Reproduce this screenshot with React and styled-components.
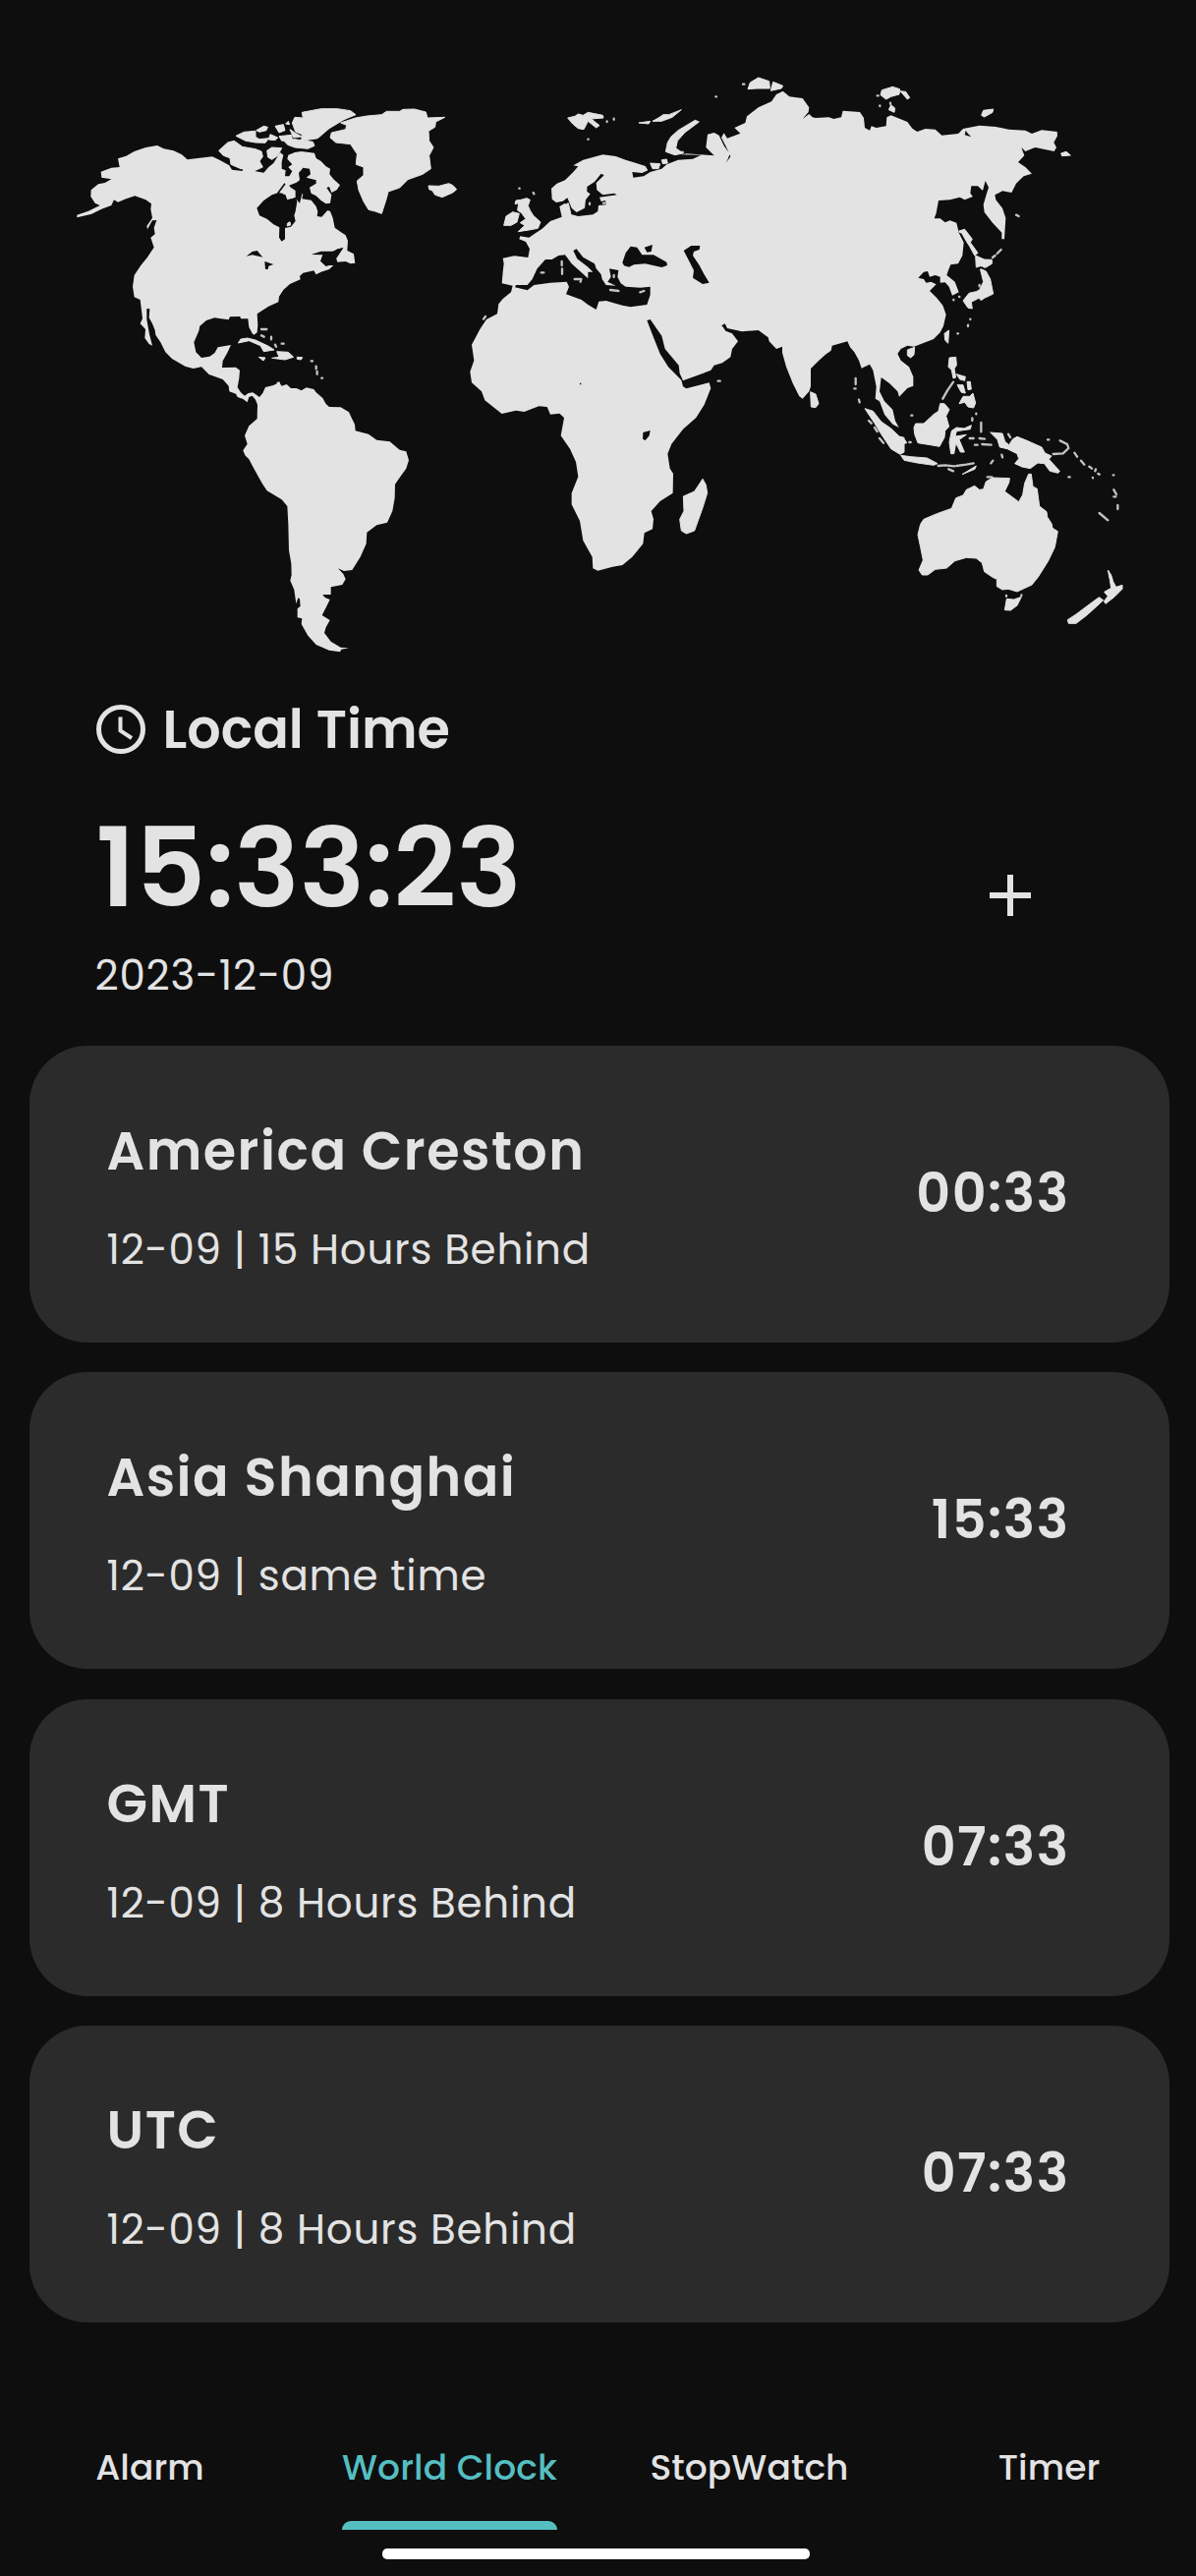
import React from "react";
import styled, { createGlobalStyle } from "styled-components";

const color = {
  page: "#0e0e0e",
  card: "#2b2b2b",
  text: "#e3e3e3",
  accent: "#55bec1",
};

const GlobalStyle = createGlobalStyle`
  * { box-sizing: border-box; }
  body {
    margin: 0;
    background: ${color.page};
    color: ${color.text};
    font-family: Poppins, Inter, "Open Sans", sans-serif;
  }
`;

const Screen = styled.main`
  display: flex;
  flex-direction: column;
  width: 1217px;
  height: 2621px;
  overflow: hidden;
  background: ${color.page};
`;

const MapSvg = styled.svg`
  display: block;
  flex: none;
  width: 1217px;
  height: 700px;

  .land { fill: ${color.text}; }
  g .land { stroke: ${color.text}; stroke-width: 3; stroke-linejoin: round; }
  .water { fill: ${color.page}; }
  .isles { fill: none; stroke: ${color.text}; stroke-width: 7; stroke-linecap: round; stroke-linejoin: round; opacity: 0.85; }
  .straits { fill: none; stroke: ${color.page}; stroke-width: 5; stroke-linejoin: round; }
`;

const Local = styled.section`
  display: flex;
  align-items: center;
  justify-content: space-between;
  height: 364px;
  padding: 12px 168px 45px 96.5px;
`;

const LocalInfo = styled.div`
  display: flex;
  flex-direction: column;
  height: 100%;
`;

const LocalTitle = styled.h1`
  display: flex;
  align-items: center;
  gap: 17.5px;
  margin: 0 0 0 1.5px;
  font-size: 54px;
  line-height: 60px;
  font-weight: 600;
  white-space: nowrap;
  svg { flex: none; }
`;

const LocalClock = styled.time`
  display: block;
  margin: 56px 0 0 1px;
  font-size: 111px;
  line-height: 110px;
  font-weight: 600;
  white-space: nowrap;
`;

const LocalDate = styled.time`
  display: block;
  margin-top: 26.5px;
  font-size: 42px;
  line-height: 56px;
  letter-spacing: 0.75px;
`;

const AddButton = styled.button`
  display: flex;
  margin: 91px 0 0;
  padding: 0;
  border: 0;
  background: none;
  color: inherit;
`;

const Zones = styled.ul`
  display: flex;
  flex-direction: column;
  gap: 30.33px;
  margin: 0;
  padding: 0 27px 0 30px;
  list-style: none;
`;

const ZoneCard = styled.li`
  display: flex;
  justify-content: space-between;
  align-items: flex-start;
  height: 302px;
  padding: 75.5px 101.5px 0 78.5px;
  border-radius: 59px;
  background: ${color.card};
`;

const ZoneName = styled.h2`
  margin: 0;
  font-size: 54px;
  line-height: 62px;
  font-weight: 600;
  letter-spacing: 1.5px;
  white-space: nowrap;
`;

const ZoneNote = styled.p`
  margin: 42.5px 0 0;
  font-size: 42px;
  line-height: 56px;
  letter-spacing: 0.75px;
  white-space: nowrap;
`;

const ZoneTime = styled.time`
  margin-top: 43.5px;
  font-size: 54px;
  line-height: 62px;
  font-weight: 600;
  letter-spacing: 1.5px;
`;

const Tabs = styled.nav`
  display: grid;
  grid-template-columns: repeat(4, 1fr);
  justify-items: center;
  margin: 112px -3px 0 0;
`;

const Tab = styled.a`
  display: flex;
  flex-direction: column;
  justify-content: space-between;
  height: 99px;
  padding-top: 11px;
  font-size: 36px;
  line-height: 50px;
  font-weight: 500;
  letter-spacing: 0.1px;
  white-space: nowrap;
  color: ${(p) => (p.$active ? color.accent : color.text)};
  &::after {
    content: "";
    height: 9px;
    border-radius: 9px 9px 0 0;
    background: ${(p) => (p.$active ? color.accent : "transparent")};
  }
`;

const HomeBar = styled.div`
  flex: none;
  width: 435px;
  height: 11px;
  margin: 19px 0 0 389px;
  border-radius: 5px;
  background: #fff;
`;

// Origin of every map sheet, in map units (three to a pixel).
const sheet = {
  northAmerica: [180, 270],
  southAmerica: [180, 1140],
  europe: [1380, 180],
  africa: [1380, 900],
  siberia: [2340, 180],
  oceania: [2340, 1080],
};

// One continuous coastline whose points lie on several sheets.
const coast = (...parts) =>
  "M" +
  parts
    .map(([name, points]) => {
      const [dx, dy] = sheet[name];
      return points
        .trim()
        .split(/\s+/)
        .map((pair) => {
          const [x, y] = pair.split(",").map(Number);
          return `${x + dx},${y + dy}`;
        })
        .join(" ");
    })
    .join(" L") +
  "Z";

const americas = coast(
  ["northAmerica", `55,386 90,374 125,357 110,350 97,330 98,310 120,292 140,288 160,277 130,272 128,254 160,242 185,240
    180,214 205,206 230,192 265,180 300,174 320,184 350,190 375,202 392,217 430,212 468,208 490,218 520,235 528,248 560,252
    565,238 590,243 600,253 625,257 640,240 655,228 675,195 685,203 680,225 680,245 692,250 690,268 703,268 712,253 700,240
    712,232 697,215 700,203 720,195 740,192 780,197 785,213 800,222 815,238 828,245 826,262 838,277 858,295 848,310 832,318
    825,300 817,303 832,325 828,350 815,352 800,342 785,328 765,318 745,320 742,337 770,341 785,360 790,375 788,390 802,392
    820,372 828,375 836,395 842,425 860,438 875,448 882,465 880,495 900,505 904,533 890,535 875,528 848,530 846,520 868,487
    850,490 835,500 820,540 838,540 825,552 800,560 785,568 778,556 745,563 735,573 737,583 705,597 685,615 672,635 670,652
    640,665 605,688 607,722 605,745 595,752 590,748 580,728 577,703 555,703 553,696 522,697 518,706 495,703 475,700 450,708
    430,725 427,740 412,775 418,805 435,822 460,818 475,808 485,790 525,783 515,805 500,832 498,852 540,851 552,860 550,885`],
  ["southAmerica", `545,42 555,58 567,68 578,60 592,58 612,72 622,60 630,42 655,36 672,27 680,38 695,33 708,45 725,45 740,52
    755,43 778,48 785,58 805,75 815,93 825,102 860,103 885,118 893,135 903,155 905,175 945,185 970,203 1010,208 1040,233
    1060,238 1068,265 1060,290 1042,315 1026,338 1025,380 1018,420 1002,455 970,463 940,485 938,520 920,560 895,600 870,603
    852,595 868,612 875,628 865,645 830,652 830,675 805,675 812,684 827,690 815,715 803,738 827,753 815,775 810,792 830,818
    860,836 885,838 862,842 858,850 825,845 785,828 760,800 740,765 742,748 728,745 728,718 737,710 735,688 730,685 724,703
    718,660 706,632 710,615 709,580 702,540 700,460 697,405 680,385 635,358 620,335 595,290 580,262 568,250 562,235 575,215
    567,190 580,160 605,138 606,95 600,80 590,68 580,72 575,88 562,78 545,72 540,62 520,55 518,38 500,18 458,3`],
  ["northAmerica", `435,850 410,855 385,848 345,825 325,805 310,775 295,752 293,738 285,718 275,700 277,673 268,672 268,705 276,750
    285,785 275,780 262,762 264,735 248,718 255,702 248,645 230,637 225,605 230,570 250,540 270,515 290,485 280,455 293,445
    290,425 298,402 285,403 270,430 268,420 285,395 280,368 282,352 265,340 232,328 205,337 180,347 168,340 160,357 130,368 100,383 55,394`]
);

const afroEurasia = coast(
  ["europe", `152,685 155,650 158,625 155,608 190,601 232,606 237,580 225,558 205,550 208,541 235,545 250,535 275,518 300,495
    335,482 328,450 345,440 355,460 365,475 385,480 430,475 445,465 447,447 470,445 468,432 455,435 450,422 503,415 495,410
    460,415 442,400 440,378 464,355 455,350 435,375 412,390 412,405 422,412 408,430 405,455 380,468 365,455 352,424 338,434
    318,438 305,428 303,395 320,380 345,370 370,345 385,328 370,325 400,308 430,300 460,292 500,297 530,308 560,317 590,327
    598,340 580,348 550,345 553,362 585,358 605,345 640,335 655,322 690,308 735,305 760,293 700,292 715,289 800,295 775,270
    780,230 800,225 815,233 830,265 848,290 838,315 850,298 835,265 822,240 830,226 840,242 880,227 862,210 895,195 900,175
    935,148 975,130 990,108 1010,98 1030,115 1070,120 1090,148 1088,162 1070,183 1090,168 1100,178`],
  ["siberia", `150,180 190,178 205,183 228,178 233,158 285,162 297,180 300,210 315,218 320,205 335,210 365,205 367,178 380,172
    430,192 445,212 460,222 485,213 515,215 535,233 585,228 600,213 650,203 700,207 740,215 790,218 810,228 840,217 887,222
    888,235 877,255 885,270 878,282 820,270 790,282 778,270 787,295 768,315 790,330 810,350 785,358 762,380 748,408 720,403
    697,415 700,430 720,455 730,485 726,550 718,550 718,530 690,500 665,468 662,445 672,410 678,392 668,372 660,402 645,388
    625,388 622,410 630,420 605,430 590,422 560,430 525,432 518,470 512,487 530,487 545,499 560,493 580,500 587,530 602,560
    598,600 585,625 562,628 555,645 550,660 575,680 587,712 567,722 557,695 545,682 530,683 530,665 515,660 498,665 492,648
    480,650 463,668 480,672 487,683 502,680 518,688 498,708 520,730 538,752 548,780 540,815 530,835 510,855 450,878 430,875 410,885`],
  ["oceania", `400,0 410,20 435,40 448,70 448,98 430,105 405,131 400,115 375,90 350,72 345,115 360,145 385,170 393,205 404,225
    385,215 360,185 345,145 332,137 335,100 325,50 315,32 290,44 282,20 268,-5 255,-20 247,-38 200,-25 197,-10 180,2 160,20
    135,45 135,100 130,115 110,137 100,130 80,90 60,40 48,-3`],
  ["europe", `1008,878 990,885 968,862 965,850 935,828 885,832 840,822 833,808 820,815 805,838 785,840 783,820 760,800 740,775
    755,768 775,790 800,808 825,815 835,830 855,838 873,862`],
  ["africa", `855,165 850,190 825,208 800,215 790,230 765,240 705,262 695,240 692,215 650,165 640,125 605,75 595,78 615,130
    635,180 660,220 700,260 705,280 715,286 785,268 790,285 770,335 745,375 705,410 670,455 658,485 665,530 675,545 674,605
    635,630 608,660 615,685 612,715 587,727 583,760 550,800 520,825 490,830 445,842 430,835 428,800 400,750 390,690 365,640
    365,605 385,555 378,510 360,470 332,430 342,375 328,362 300,365 290,342 265,340 220,357 195,353 152,363 100,322 90,295
    60,268 55,235 67,200 60,152 85,105 105,75 138,58 142,28`],
  ["europe", `155,732 180,712 185,692`]
);

const sheets = [
  {
    name: "northAmerica",
    land: [
      "M488,190L515,165 535,160 560,178 600,185 618,192 622,208 612,222 622,240 600,250 555,245 525,232 522,212 502,205Z",
      "M540,145L565,133 600,130 600,148 612,155 640,152 630,166 600,165 570,160Z",
      "M602,128L625,115 637,118 633,128 612,133Z M660,115L685,110 690,128 672,135Z M692,108l8-8 4,10z",
      "M645,140L668,150 660,158 640,156Z M672,146L710,142 712,156 680,160Z M705,125l18,12 18,10 -25,3z",
      "M635,190L650,180 680,182 668,205 650,217 638,210Z M685,158L720,155 775,163 780,175 760,184 720,180 698,172Z",
      "M712,105L720,88 745,90 742,73 800,62 850,62 890,68 906,80 870,95 825,122 790,152 740,160 742,140 722,132Z",
      "M905,90L940,84 985,80 1000,70 1040,70 1050,64 1085,63 1120,72 1125,90 1178,88 1150,102 1148,118 1128,130 1130,160 1143,180 1130,205 1135,245 1110,262 1065,278 1040,303 1005,315 1000,335 985,382 965,375 945,370 930,345 915,310 910,282 930,265 930,240 907,232 910,200 890,170 845,165 828,150 832,135 875,125 878,112 860,105Z",
      "M1128,297L1160,298 1190,290 1203,296 1214,308 1202,318 1170,332 1148,325 1140,312 1130,308Z",
      "M547,777L555,765 575,762 600,768 640,787 657,798 625,803 615,785 580,770Z",
      "M650,823L672,820 665,803 700,805 716,820 690,828Z M610,820l20,2 -6,9z M727,820l16,1 -4,7 -12,-2z",
      "M685,305L700,292 712,322 720,330 710,336 700,320 685,322Z M697,412l8-5 2,10 -10,3z",
    ],
    water: [
      "M670,318L690,322 697,340 722,332 727,345 722,375 718,388 722,405 708,422 690,426 690,460 680,467 672,455 673,424 655,415 635,398 612,388 604,365 625,342 650,325Z",
      "M700,297L725,287 735,280 732,258 745,242 765,245 768,262 755,272 785,280 785,290 765,302 770,322 742,322 735,350 722,335 722,312Z",
      "M572,512L590,498 605,495 622,515 590,508Z M628,528L655,537 640,542 638,552 630,552Z",
      "M770,507L800,497 835,497 868,485 845,515 850,530 835,537 815,543 798,527 805,508Z M1102,238l10-5 10,12 -18,0z",
    ],
    isles: "M618,735h16M618,754l8,4M648,758v8M660,782l3,6M680,779h6M770,832h4M785,848v8M788,864v8M802,884h2M668,899h4",
    straits: "M690,290L668,320M700,186L770,190",
  },
  {
    name: "europe",
    land: [
      "M210,430L228,425 238,430 232,448 238,462 248,478 270,498 262,517 235,522 202,527 222,508 208,500 225,488 212,470 200,462 203,440 192,443 195,432Z",
      "M158,508L165,480 185,467 205,472 198,498 180,508Z",
      "M353,180L375,175 385,168 400,172 415,163 460,172 462,180 425,183 450,203 440,210 415,190 402,215 385,212 368,198Z",
      "M570,195L605,190 600,198Z M612,190L630,180 645,170 662,170 700,155 672,178 640,190Z",
      "M652,283L658,255 668,238 690,218 742,187 754,192 710,225 688,250 683,272 705,288 680,293Z",
      "M903,92L910,72 935,57 968,68 970,90 930,90Z M973,97L980,70 1010,82 1005,90Z",
      "M605,318L635,320 630,335 612,335Z M640,308l15-2 3,12 -15,2z M335,450L355,440 362,470 340,480Z",
    ],
    water: [
      "M192,697L230,706 250,690 300,683 350,680 357,695 348,718 395,735 415,750 440,765 448,740 470,738 520,752 545,757 595,750 605,720 605,695 575,698 530,695 515,685 505,665 508,645 480,640 485,665 475,680 500,692 470,690 458,672 455,658 440,640 435,625 400,605 380,580 370,585 382,610 415,635 430,650 415,650 415,670 395,652 365,625 345,598 325,600 305,612 285,612 260,640 245,672 230,690 195,690Z",
      "M520,622L530,592 545,572 565,575 580,598 615,598 655,620 657,630 640,636 590,625 555,628 540,635 525,631Z M587,575L612,567 608,588 595,590Z",
      "M707,585L730,570 757,570 755,582 738,588 735,600 755,630 768,655 785,683 765,687 735,668 738,645 720,610Z",
    ],
    isles: "M272,652h8M335,618v12M336,640v16M374,672h20l-2,8M483,705l25,3M574,712l12,-4M494,660v6M102,786l-6,8M205,395h1M248,408l2,4M415,245h1M473,190v2M494,182v3M805,115h2M888,77h4M420,440v4M462,440h4M695,285h10",
  },
  {
    name: "africa",
    land: ["M765,562L775,580 779,605 765,650 740,720 715,729 700,720 695,685 708,660 706,615 740,600Z"],
    water: ["M583,420L605,414 602,430 590,444 582,440Z M390,269h4v5h-4z"],
    isles: "M812,263h6",
  },
  {
    name: "siberia",
    land: [
      "M348,110L352,95 385,85 407,92 405,108 380,115 365,123Z M408,98L425,100 437,118 430,123Z M373,155L380,140 392,150 390,163Z",
      "M656,172L662,157 692,153 690,163 665,177Z M899,288L915,283 928,294 902,296Z",
      "M587,525L605,520 628,550 622,560 645,592 635,600 620,572Z M638,600L665,612 688,613 688,625 668,637 652,632 640,636Z",
      "M652,640L670,648 683,672 692,717 665,730 655,737 648,730 625,742 628,762 615,760 600,738 618,715 640,710 650,705 662,680Z",
      "M543,838L557,828 554,868 545,858Z M430,888L452,880 450,903 440,912 430,905Z",
    ],
    water: ["M608,218L615,228 625,238 605,232Z"],
    isles: "M690,606l8,-6M704,594l12,-12M762,476l8,4M583,838h2M615,812v4M622,794v1M571,735v1M588,726h1M378,134v3M338,112h3M346,142v2M650,690v4",
    straits: "M592,532L632,604M648,640l12,-4",
  },
  {
    name: "oceania",
    land: [
      "M134,116L150,123 159,152 150,164 136,162Z M300,167L325,175 350,207 380,228 405,252 420,256 420,300 408,307 380,290 350,245 330,212Z",
      "M450,225L455,213 480,213 510,185 525,175 530,152 543,152 558,170 548,190 557,222 545,235 543,255 528,283 500,278 462,272 452,245Z",
      "M565,235L580,225 603,228 625,218 622,230 580,236 576,252 610,247 588,262 604,300 592,300 578,272 572,305 563,305 558,270Z",
      "M410,310L440,314 490,318 522,335 510,340 460,333 420,325Z M597,368L640,342 636,352Z",
      "M683,240L720,243 728,268 740,278 752,260 765,253 795,265 840,285 850,303 870,312 862,322 895,358 890,364 865,358 848,335 828,333 805,350 780,345 758,335 770,320 765,305 735,290 712,285 705,262Z",
      "M558,12L578,10 580,35 573,45 578,72 570,75 565,50 555,40Z M588,152L600,130 620,130 630,120 638,150 632,165 615,162 605,148Z M582,95L600,95 607,120 595,118Z M580,62L607,70 605,82 590,78Z M612,85L622,85 625,108 615,110Z",
      "M462,552L470,520 480,505 520,488 565,472 578,440 600,432 610,415 635,403 650,415 662,413 670,390 690,378 742,380 740,393 727,420 770,452 782,430 788,395 800,367 808,367 813,405 826,412 833,465 855,482 857,498 870,518 873,532 889,542 880,590 860,632 830,680 810,705 765,726 738,718 720,720 703,710 703,688 690,682 665,665 658,638 640,624 610,622 575,632 550,654 515,658 492,675 475,675 465,660 478,630 470,590Z",
      "M733,748L755,750 778,742 765,768 745,783 727,782Z",
      "M1042,660L1052,675 1058,695 1067,712 1086,706 1086,718 1062,742 1035,763 1030,755 1042,740 1031,727 1052,715 1048,690Z M919,812L945,795 985,765 1015,743 1028,752 1000,778 975,800 945,823 922,823Z",
      "M412,254L422,262 428,272 415,275Z",
    ],
    water: ["M665,668L692,653 680,668 698,665 685,680 670,682Z M736,402l8,-4 -2,12z"],
    isles: "M538,137L552,112 570,86M875,306L905,304 922,288 918,276 896,265M524,342l20,-2 30,3M580,342L610,338 632,334M655,210v28M636,278h8M658,276l28,2M650,258l16,2M718,308l2,8M685,334l6,-8M556,352l14,6M620,258h12M738,245l6,10M858,262h4M940,302l8,12M960,326l10,12M985,344l8,6M1005,352l-2,6M1012,366l4,2M1060,415l8,14M1060,436h6M1016,486L1042,508M1058,370h2M272,75v18M268,106h4M282,140l2,8M312,204l8,8M330,225l8,12M345,258l12,14M436,270h4M442,188h3M640,182v2M628,196v8M674,376h14M732,738v2M778,736v2M922,376h4M996,378v1M1072,462v12",
    straits: "M350,192L405,236",
  },
];

const WorldMap = () => (
  <MapSvg viewBox="0 0 3651 2100" role="img" aria-label="World map">
    <path className="land" d={americas} />
    <path className="land" d={afroEurasia} />
    {sheets.map(({ name, land, water, isles, straits }) => (
      <g key={name} transform={`translate(${sheet[name].join(" ")})`}>
        <path className="water" d={water.join(" ")} />
        <path className="land" d={land.join(" ")} />
        {straits && <path className="straits" d={straits} />}
        <path className="isles" d={isles} />
      </g>
    ))}
  </MapSvg>
);

const ClockIcon = () => (
  <svg width="50" height="50" viewBox="0 0 50 50" fill="none" stroke="currentColor">
    <circle cx="25" cy="25" r="22.5" strokeWidth="5" />
    <path d="M24.5 12.5V26.5L36 34" strokeWidth="4" />
  </svg>
);

const PlusIcon = () => (
  <svg width="42" height="42" viewBox="0 0 42 42" stroke="currentColor" strokeWidth="6">
    <path d="M21 0V42M0 21H42" />
  </svg>
);

const zones = [
  { name: "America Creston", note: "12-09 | 15 Hours Behind", time: "00:33" },
  { name: "Asia Shanghai", note: "12-09 | same time", time: "15:33" },
  { name: "GMT", note: "12-09 | 8 Hours Behind", time: "07:33" },
  { name: "UTC", note: "12-09 | 8 Hours Behind", time: "07:33" },
];

const tabs = ["Alarm", "World Clock", "StopWatch", "Timer"];

export default function App() {
  return (
    <>
      <GlobalStyle />
      <Screen>
        <WorldMap />
        <Local>
          <LocalInfo>
            <LocalTitle>
              <ClockIcon />
              <span>Local Time</span>
            </LocalTitle>
            <LocalClock>15:33:23</LocalClock>
            <LocalDate>2023-12-09</LocalDate>
          </LocalInfo>
          <AddButton aria-label="Add city">
            <PlusIcon />
          </AddButton>
        </Local>
        <Zones>
          {zones.map(({ name, note, time }) => (
            <ZoneCard key={name}>
              <div>
                <ZoneName>{name}</ZoneName>
                <ZoneNote>{note}</ZoneNote>
              </div>
              <ZoneTime>{time}</ZoneTime>
            </ZoneCard>
          ))}
        </Zones>
        <Tabs>
          {tabs.map((label) => (
            <Tab key={label} $active={label === "World Clock"}>
              {label}
            </Tab>
          ))}
        </Tabs>
        <HomeBar />
      </Screen>
    </>
  );
}
